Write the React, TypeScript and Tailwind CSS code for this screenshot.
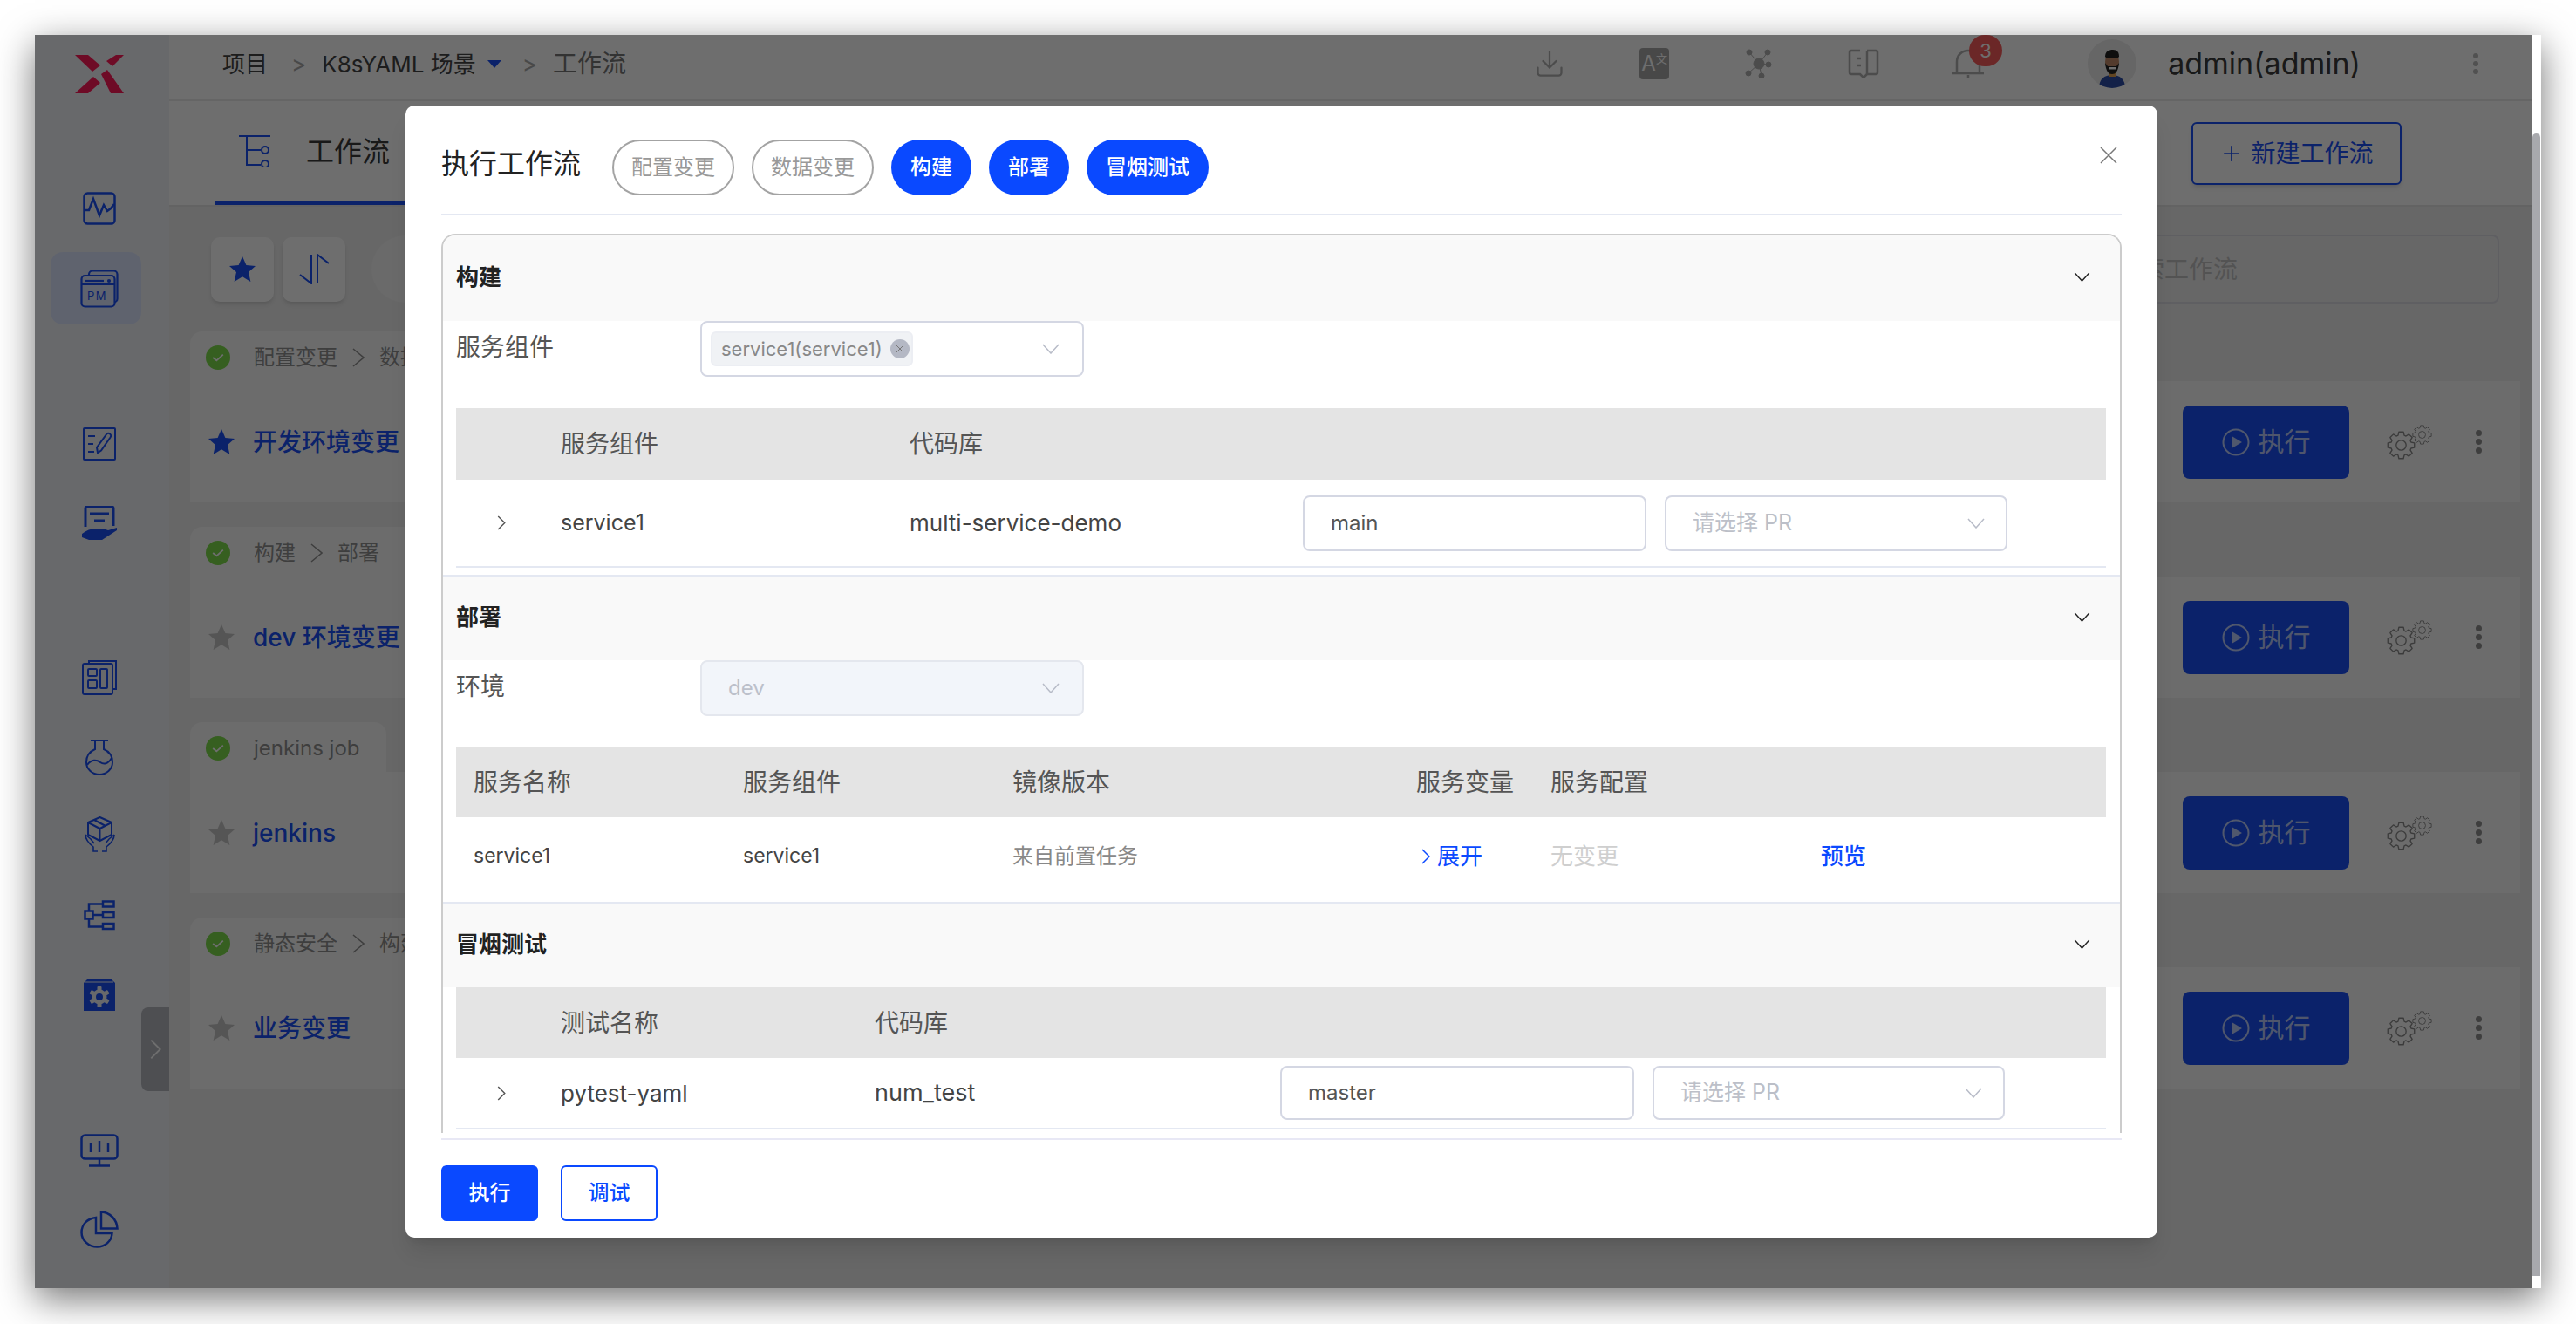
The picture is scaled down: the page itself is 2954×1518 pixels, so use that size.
import React from "react";
import { Plus, Download } from "lucide-react";

const StarIcon = ({ className }: { className: string }) => (
  <svg viewBox="0 0 30 29" className={className} fill="currentColor">
    <path d="M15 0l4.400 10 10.600 1-8 7.100 2.400 10.900-9.400-5.700-9.400 5.700 2.400-10.900-8-7.100 10.600-1z" />
  </svg>
);

const Sep = ({ className }: { className: string }) => (
  <svg viewBox="0 0 14 22" className={className} fill="none" stroke="#8f8f8f" strokeWidth="1.500">
    <polyline points="1,1 13,11 1,21" />
  </svg>
);

const DownChevron = ({ className, color }: { className: string; color: string }) => (
  <svg viewBox="0 0 20 12" className={className} fill="none" stroke={color} strokeWidth="1.500">
    <polyline points="1,1 10,11 19,1" />
  </svg>
);

const RightChevron = ({ className, color }: { className: string; color: string }) => (
  <svg viewBox="0 0 10 18" className={className} fill="none" stroke={color} strokeWidth="1.500">
    <polyline points="1,1 9,9 1,17" />
  </svg>
);

// outline gear with 8 teeth, drawn in a 32x32 box
const gearPath = () => {
  const pts: string[] = [];
  for (let i = 0; i < 8; i++) {
    const a = (i * Math.PI) / 4;
    [
      [-0.3, 11.5],
      [-0.17, 15],
      [0.17, 15],
      [0.3, 11.5],
    ].forEach(([da, r]) => {
      pts.push(`${(16 + r * Math.cos(a + da)).toFixed(2)} ${(16 + r * Math.sin(a + da)).toFixed(2)}`);
    });
  }
  return `M${pts.join("L")}Z`;
};

const Gear = ({ className }: { className: string }) => (
  <svg viewBox="0 0 32 32" className={className} fill="none" stroke="#8a8a8a" strokeWidth="1.300" strokeLinejoin="round">
    <path d={gearPath()} />
    <circle cx="16" cy="16" r="5.500" />
  </svg>
);

const GearPair = () => (
  <div className="relative h-[40px] w-[52px]">
    <Gear className="absolute bottom-0 left-0 h-[33px] w-[33px]" />
    <Gear className="absolute right-0 top-0 h-[23px] w-[23px]" />
  </div>
);

const Dots = ({ className }: { className: string }) => (
  <div className={`flex flex-col gap-[3px] ${className}`}>
    <span className="h-[7px] w-[7px] rounded-full bg-[#909090]" />
    <span className="h-[7px] w-[7px] rounded-full bg-[#909090]" />
    <span className="h-[7px] w-[7px] rounded-full bg-[#909090]" />
  </div>
);

const WorkflowCard = ({
  stages,
  title,
  starred,
  tabWidth,
}: {
  stages: string[];
  title: string;
  starred?: boolean;
  tabWidth: string;
}) => (
  <div className="mb-[28px] flex flex-col">
    <div className={`flex h-[57px] items-center gap-[27px] overflow-hidden rounded-t-[14px] bg-[#fafafa] pl-[18px] pt-[2px] ${tabWidth}`}>
      <span className="flex h-[28px] w-[28px] shrink-0 items-center justify-center rounded-full bg-[#7ddc4a]">
        <svg viewBox="0 0 16 12" className="h-[10px] w-[14px]" fill="none" stroke="#fff" strokeWidth="2.200">
          <polyline points="1,6 6,10 15,2" />
        </svg>
      </span>
      <div className="flex items-center gap-[17px] text-[24px] text-[#909090]">
        {stages.map((s, i) => (
          <React.Fragment key={s}>
            {i > 0 && <Sep className="h-[22px] w-[14px] shrink-0" />}
            <span className="whitespace-nowrap">{s}</span>
          </React.Fragment>
        ))}
      </div>
    </div>
    <div className="flex h-[139px] items-center bg-[#fafafa] pl-[21px] pr-[44px]">
      <StarIcon className={`h-[29px] w-[30px] ${starred ? "text-[#1a50f5]" : "text-[#c6c6c6]"}`} />
      <span className="ml-[21px] text-[28px] font-medium text-[#1a50f5]">{title}</span>
      <button className="ml-auto flex h-[84px] w-[191px] items-center justify-center gap-[10px] rounded-[8px] bg-[#1a50f5] text-[30px] text-white/70">
        <svg viewBox="0 0 32 32" className="h-[32px] w-[32px]" fill="none" stroke="currentColor" strokeWidth="2">
          <circle cx="16" cy="16" r="14.500" />
          <path d="M12 9.500l11 6.500-11 6.500z" fill="currentColor" stroke="none" />
        </svg>
        执行
      </button>
      <div className="ml-[43px]">
        <GearPair />
      </div>
      <Dots className="ml-[50px]" />
    </div>
  </div>
);

const Sidebar = () => (
  <aside className="relative flex h-full w-[154px] flex-col items-start bg-[#f2f4f9] text-[#1a50f5]">
    <svg viewBox="0 0 56 44" className="ml-[46px] mt-[23px] h-[44px] w-[56px]" fill="#ff1a58">
      <path d="M0 0H15L29 12 20 19Z" />
      <path d="M36 7L47 0H56L43 13Z" />
      <path d="M0 44L21 25 29 32 15 44Z" />
      <path d="M30 22L37 17 56 44H41Z" />
    </svg>
    <svg viewBox="0 0 38 38" className="ml-[55px] mt-[113px] h-[38px] w-[38px]" fill="none" stroke="currentColor" strokeWidth="2.500">
      <rect x="1.500" y="1.500" width="35" height="35" rx="4" />
      <polyline points="2,21 7,21 12,8 19,27 24,15 28,22 32,19 36,14" />
    </svg>
    <div className="ml-[18px] mt-[31px] flex h-[83px] w-[104px] items-center justify-center rounded-[14px] bg-[#dde6ff]">
      <svg viewBox="0 0 44 44" className="ml-[8px] h-[44px] w-[44px]" fill="none" stroke="currentColor" strokeWidth="2.200">
        <rect x="10" y="1.500" width="32.500" height="36" rx="4" />
        <rect x="1.500" y="7" width="38" height="35.500" rx="4" fill="#dde6ff" />
        <line x1="6" y1="13" x2="27" y2="13" />
        <circle cx="33" cy="13" r="1" />
        <line x1="1.500" y1="17" x2="39.500" y2="17" />
        <text x="8" y="35" fontSize="13" fill="currentColor" stroke="none" letterSpacing="1.500">PM</text>
      </svg>
    </div>
    <svg viewBox="0 0 38 38" className="ml-[55px] mt-[118px] h-[38px] w-[38px]" fill="none" stroke="currentColor" strokeWidth="2">
      <rect x="1" y="1" width="36" height="36" rx="1" />
      <line x1="6" y1="10" x2="14" y2="10" />
      <line x1="6" y1="19" x2="12" y2="19" />
      <line x1="6" y1="28" x2="13" y2="28" />
      <path d="M17 29l-1-6 11-15c1-1.500 3-1.500 4-.500 1.500 1 1.500 2.500.500 4l-10.500 15z" />
    </svg>
    <svg viewBox="0 0 40 39" className="ml-[54px] mt-[52px] h-[39px] w-[40px]" fill="none" stroke="currentColor" strokeWidth="3">
      <path d="M4 24V3a2 2 0 0 1 2-2h28a2 2 0 0 1 2 2v20" />
      <line x1="9" y1="9" x2="31" y2="9" />
      <line x1="14" y1="17" x2="26" y2="17" />
      <path d="M0 32c5-4 10-6 16-6h8l6 2 10-3v3L23 39H8l-8-3z" fill="currentColor" stroke="none" />
    </svg>
    <svg viewBox="0 0 40 40" className="ml-[54px] mt-[138px] h-[40px] w-[40px]" fill="none" stroke="currentColor" strokeWidth="2">
      <path d="M8 4V1h31v32h-4" />
      <rect x="1" y="4" width="34" height="35" rx="2" />
      <rect x="7" y="10" width="10" height="8" rx="1" />
      <rect x="7" y="23" width="10" height="9" rx="1" />
      <rect x="21" y="10" width="8" height="22" rx="1" />
    </svg>
    <svg viewBox="0 0 32 41" className="ml-[58px] mt-[51px] h-[41px] w-[32px]" fill="none" stroke="currentColor" strokeWidth="2">
      <line x1="6" y1="1" x2="26" y2="1" />
      <path d="M11 1v10C4 14 1 20 1 26c0 8 7 14 15 14s15-6 15-14c0-6-3-12-10-15V1" />
      <path d="M2 29c5-7 11-6 15-3s9 2 13-5" />
    </svg>
    <svg viewBox="0 0 35 45" className="ml-[57px] mt-[47px] h-[45px] w-[35px]" fill="none" stroke="currentColor" strokeWidth="2">
      <path d="M17.500 1L31 7v14l-13.500 7L4 21V7z" />
      <path d="M4 7l13.500 7L31 7M17.500 14v14M11 4l13 7" />
      <path d="M1 21c0 6 4 10 9 14v5h5M34 21c0 6-4 10-9 14v5h-5" strokeWidth="1.600" />
      <path d="M1 21l6 5 4 5M34 21l-6 5-4 5" strokeWidth="1.600" />
    </svg>
    <svg viewBox="0 0 36 35" className="ml-[56px] mt-[51px] h-[35px] w-[36px]" fill="none" stroke="currentColor" strokeWidth="2.500">
      <rect x="1.500" y="12.500" width="9" height="9" />
      <rect x="22" y="1.500" width="12.500" height="6" />
      <rect x="22" y="14" width="12.500" height="6" />
      <rect x="22" y="27" width="12.500" height="6" />
      <path d="M6 12V4.500h16M6 22v8.500h16M10.500 17H22" />
    </svg>
    <svg viewBox="0 0 36 36" className="ml-[56px] mt-[56px] h-[36px] w-[36px]">
      <path d="M4 0h28l4 4v32H0V4z" fill="currentColor" />
      <line x1="2" y1="3" x2="34" y2="3" stroke="#f2f4f9" strokeWidth="1" />
      <g fill="#f2f4f9">
        <circle cx="18" cy="20" r="8.500" />
        <rect x="15.500" y="8" width="5" height="24" rx="1" />
        <rect x="15.500" y="8" width="5" height="24" rx="1" transform="rotate(60 18 20)" />
        <rect x="15.500" y="8" width="5" height="24" rx="1" transform="rotate(120 18 20)" />
      </g>
      <circle cx="18" cy="20" r="4" fill="currentColor" />
    </svg>
    <svg viewBox="0 0 44 38" className="ml-[52px] mt-[141px] h-[38px] w-[44px]" fill="none" stroke="currentColor" strokeWidth="2.500">
      <rect x="1.500" y="1.500" width="41" height="27" rx="4" />
      <path d="M12 10v11M22 8v13M32 10v11M22 29v7M10 36.500h24" />
    </svg>
    <svg viewBox="0 0 44 43" className="ml-[52px] mt-[50px] h-[43px] w-[44px]" fill="none" stroke="currentColor" strokeWidth="2.500">
      <path d="M18 8C8 9 1.500 16 1.500 25c0 9 8 16.500 18 16.500 9 0 16.500-6.500 17-15.500H18z" />
      <path d="M24 1.500v19h18.500C42 10 34 2 24 1.500z" />
    </svg>
    <div className="absolute right-0 top-[1115px] flex h-[96px] w-[32px] items-center justify-center rounded-l-[8px] bg-[#b5b8bf]">
      <RightChevron className="h-[24px] w-[13px]" color="#fff" />
    </div>
  </aside>
);

const TopBar = () => (
  <header className="flex h-[76px] shrink-0 items-center border-b-2 border-[#e9e9e9] bg-white pb-[8px] pl-[61px] pr-[62px] text-[26px] text-[#454545]">
    <span>项目</span>
    <span className="ml-[27px] mr-[18px] text-[#aaa]">&gt;</span>
    <span>K8sYAML 场景</span>
    <span className="ml-[13px] h-0 w-0 border-x-[8px] border-t-[9px] border-x-transparent border-t-[#1a50f5]" />
    <span className="ml-[24px] text-[#aaa]">&gt;</span>
    <span className="ml-[18px] text-[28px] text-[#777]">工作流</span>
    <Download className="ml-auto h-[36px] w-[36px] text-[#b0b0b0]" strokeWidth={1.500} />
    <div className="ml-[85px] flex h-[36px] w-[34px] items-center justify-center rounded-[4px] bg-[#a8a8a8] text-[24px] leading-none text-white">
      A<span className="-mt-[12px] text-[13px]">文</span>
    </div>
    <svg viewBox="0 0 34 34" className="ml-[86px] h-[34px] w-[34px]" fill="#b0b0b0" stroke="#b0b0b0">
      <circle cx="17" cy="17" r="6" />
      <circle cx="6" cy="4" r="3" />
      <circle cx="27" cy="4" r="3" />
      <circle cx="5" cy="28" r="3" />
      <circle cx="28" cy="18" r="3" />
      <circle cx="20" cy="31" r="3" />
      <path d="M6 4l11 13 10-13M5 28l12-11 11 1M17 17l3 14" fill="none" />
    </svg>
    <svg viewBox="0 0 36 34" className="ml-[85px] h-[34px] w-[36px]" fill="none" stroke="#b0b0b0" strokeWidth="2.500">
      <path d="M14 2H4a2 2 0 0 0-2 2v23a2 2 0 0 0 2 2h10l4 4 4-4h10a2 2 0 0 0 2-2V4a2 2 0 0 0-2-2H22" />
      <line x1="22" y1="2" x2="22" y2="29" />
      <line x1="10" y1="11" x2="15" y2="11" />
      <line x1="10" y1="19" x2="15" y2="19" />
    </svg>
    <div className="relative ml-[84px] h-[34px] w-[36px]">
      <svg viewBox="0 0 36 34" className="h-[34px] w-[36px]" fill="none" stroke="#b0b0b0" strokeWidth="2.500">
        <path d="M5 28V15C5 7 11 2 18 2s13 5 13 13v13M0 28h36M18 30v3" />
      </svg>
      <span className="absolute -right-[21px] -top-[16px] flex h-[36px] w-[38px] items-center justify-center rounded-full bg-[#f85a5a] text-[22px] text-white">
        3
      </span>
    </div>
    <div className="ml-[119px] flex h-[56px] w-[56px] items-end justify-center overflow-hidden rounded-full bg-[#ececec]">
      <svg viewBox="0 0 34 44" className="h-[44px] w-[34px]">
        <path d="M2 44c0-10 6-15 15-15s15 5 15 15z" fill="#2c4ea8" />
        <rect x="13" y="22" width="8" height="9" fill="#e0a050" />
        <ellipse cx="17" cy="14" rx="8" ry="11" fill="#c08a68" />
        <path d="M9 8c0-6 4-8 9-8s7 3 7 8l-2 2-12 0z" fill="#222" />
        <path d="M9 15c1 10 4 13 8 13s7-3 8-13l-3 4h-10z" fill="#222" />
        <rect x="13" y="20" width="8" height="2.500" fill="#fff" />
      </svg>
    </div>
    <span className="ml-[36px] text-[34px] leading-none text-[#3a3a3a]">admin(admin)</span>
    <Dots className="ml-[129px] [&>span]:h-[6px] [&>span]:w-[6px] [&>span]:bg-[#bbb]" />
  </header>
);

const TabBar = () => (
  <div className="flex h-[121px] shrink-0 items-stretch border-b-2 border-[#e6e6e6] bg-white pl-[52px] pr-[150px]">
    <div className="flex w-[300px] items-center border-b-4 border-[#1a50f5] pl-[28px]">
      <svg viewBox="0 0 36 37" className="h-[37px] w-[36px] text-[#1a50f5]" fill="none" stroke="currentColor" strokeWidth="2">
        <path d="M0 1h36M9 1v33h16M9 17h16" />
        <circle cx="30" cy="17" r="4" />
        <circle cx="30" cy="33" r="4" />
      </svg>
      <span className="ml-[41px] text-[32px] text-[#3a3a3a]">工作流</span>
    </div>
    <button className="my-auto ml-auto flex h-[72px] w-[241px] items-center justify-center gap-[8px] rounded-[6px] border-2 border-[#1a50f5] text-[28px] text-[#1a50f5] shadow-md">
      <Plus className="h-[28px] w-[28px]" strokeWidth={1.500} />
      新建工作流
    </button>
  </div>
);

const Toolbar = () => (
  <div className="ml-[48px] mr-[38px] mt-[32px] flex h-[79px] shrink-0 items-center">
    <div className="flex h-[74px] w-[72px] items-center justify-center rounded-[10px] bg-white text-[#1a50f5] shadow-md">
      <StarIcon className="h-[29px] w-[30px]" />
    </div>
    <div className="ml-[10px] flex h-[74px] w-[72px] items-center justify-center rounded-[10px] bg-white text-[#1a50f5] shadow-md">
      <svg viewBox="0 0 34 35" className="h-[35px] w-[34px]" fill="none" stroke="currentColor" strokeWidth="2">
        <path d="M14 1v33L1 24M21 34V1l13 10" />
      </svg>
    </div>
    <div className="ml-[30px] h-[77px] w-[300px] rounded-full bg-[#f5f5f5]" />
    <div className="ml-auto flex h-[79px] w-[700px] items-center justify-end rounded-[8px] border-2 border-[#dcdce4] pr-[298px] text-[28px] text-[#c0c0c0]">
      搜索工作流
    </div>
  </div>
);

const SelectBox = ({ text, className }: { text: string; className: string }) => (
  <div className={`flex items-center justify-between rounded-[8px] border-2 border-[#d4d7e3] ${className}`}>
    <span className="text-[25px] text-[#bcbfc8]">{text}</span>
    <DownChevron className="h-[12px] w-[20px]" color="#b8bcc8" />
  </div>
);

const SectionHead = ({ title, first }: { title: string; first?: boolean }) => (
  <div
    className={`flex items-center justify-between bg-[#f9f9f9] pb-[3px] pl-[15px] pr-[34px] ${
      first ? "h-[98px]" : "h-[98px] border-t-2 border-[#e4e8f2]"
    }`}
  >
    <span className="text-[26px] font-bold text-[#222]">{title}</span>
    <DownChevron className="h-[11px] w-[19px]" color="#222" />
  </div>
);

const ExecuteModal = () => (
  <div className="absolute left-[425px] top-[81px] flex h-[1298px] w-[2009px] flex-col rounded-[10px] bg-white px-[41px] shadow-xl">
    <div className="flex h-[126px] shrink-0 items-center border-b-2 border-[#e4e8f2] pt-[18px]">
      <span className="-mt-[8px] text-[32px] text-[#222]">执行工作流</span>
      <div className="ml-[36px] flex items-center gap-[20px] text-[24px]">
        <span className="flex h-[64px] w-[140px] items-center justify-center rounded-full border-2 border-[#a3a3a3] text-[#999]">配置变更</span>
        <span className="flex h-[64px] w-[140px] items-center justify-center rounded-full border-2 border-[#a3a3a3] text-[#999]">数据变更</span>
        <span className="flex h-[64px] w-[92px] items-center justify-center rounded-full bg-[#0a49ff] font-medium text-white">构建</span>
        <span className="flex h-[64px] w-[92px] items-center justify-center rounded-full bg-[#0a49ff] font-medium text-white">部署</span>
        <span className="flex h-[64px] w-[140px] items-center justify-center rounded-full bg-[#0a49ff] font-medium text-white">冒烟测试</span>
      </div>
    </div>
    <svg viewBox="0 0 20 20" className="absolute right-[46px] top-[47px] h-[20px] w-[20px]" fill="none" stroke="#777" strokeWidth="1.500">
      <path d="M1 1l18 18M19 1L1 19" />
    </svg>

    <div className="mt-[21px] h-[1031px] shrink-0 overflow-hidden rounded-t-[16px] border-x-2 border-t-2 border-[#cccccc] text-[#444]">
      <SectionHead title="构建" first />
      <div className="flex items-center pl-[15px]">
        <span className="-mt-[4px] w-[280px] text-[28px] text-[#555]">服务组件</span>
        <div className="flex h-[64px] w-[440px] items-center justify-between rounded-[8px] border-2 border-[#d4d7e3] pl-[10px] pr-[26px]">
          <span className="flex h-[40px] w-[232px] items-center rounded-[6px] border-2 border-[#eceef3] bg-[#f0f2f5] pl-[10px] text-[22px] text-[#888]">
            service1(service1)
            <span className="ml-[9px] flex h-[22px] w-[22px] items-center justify-center rounded-full bg-[#b4b8c4]">
              <svg viewBox="0 0 10 10" className="h-[10px] w-[10px]" fill="none" stroke="#777" strokeWidth="1">
                <path d="M1 1l8 8M9 1L1 9" />
              </svg>
            </span>
          </span>
          <DownChevron className="h-[12px] w-[20px]" color="#b8bcc8" />
        </div>
      </div>
      <div className="ml-[15px] mr-[16px] mt-[36px] grid h-[82px] grid-cols-[120px_400px_1fr] items-center bg-[#e4e4e4] text-[28px] text-[#555]">
        <span />
        <span>服务组件</span>
        <span>代码库</span>
      </div>
      <div className="ml-[15px] mr-[16px] grid h-[101px] grid-cols-[120px_400px_451px_394px_393px] items-center border-b-2 border-[#e4e8f2] text-[26px]">
        <RightChevron className="ml-[47px] h-[17px] w-[10px]" color="#555" />
        <span className="text-[25px]">service1</span>
        <span>multi-service-demo</span>
        <div className="flex h-[64px] w-[394px] items-center rounded-[8px] border-2 border-[#d4d7e3] pl-[30px] text-[24px] text-[#555]">main</div>
        <SelectBox text="请选择 PR" className="ml-[21px] h-[64px] w-[393px] pl-[30px] pr-[24px]" />
      </div>
      <div className="h-[8px]" />

      <SectionHead title="部署" />
      <div className="flex items-center pl-[15px]">
        <span className="-mt-[4px] w-[280px] text-[28px] text-[#555]">环境</span>
        <div className="flex h-[64px] w-[440px] items-center justify-between rounded-[8px] border-2 border-[#e4e7ee] bg-[#f2f5fa] pl-[30px] pr-[26px]">
          <span className="text-[24px] text-[#bcc0ca]">dev</span>
          <DownChevron className="h-[12px] w-[20px]" color="#b8bcc8" />
        </div>
      </div>
      <div className="ml-[15px] mr-[16px] mt-[36px] grid h-[80px] grid-cols-[20px_309px_309px_463px_154px_310px_1fr] items-center bg-[#e4e4e4] text-[28px] text-[#555]">
        <span />
        <span>服务名称</span>
        <span>服务组件</span>
        <span>镜像版本</span>
        <span>服务变量</span>
        <span>服务配置</span>
      </div>
      <div className="ml-[15px] mr-[16px] grid h-[97px] grid-cols-[20px_309px_309px_463px_154px_310px_1fr] items-center pb-[8px] text-[23px]">
        <span />
        <span>service1</span>
        <span>service1</span>
        <span className="text-[24px] text-[#888]">来自前置任务</span>
        <span className="flex items-center gap-[8px] text-[26px] text-[#0a49ff]">
          <RightChevron className="ml-[6px] h-[20px] w-[10px]" color="#0a49ff" />
          展开
        </span>
        <span className="text-[26px] text-[#cfcfcf]">无变更</span>
        <span className="text-[26px] font-medium text-[#0a49ff]">预览</span>
      </div>

      <SectionHead title="冒烟测试" />
      <div className="ml-[15px] mr-[16px] grid h-[81px] grid-cols-[120px_360px_1fr] items-center bg-[#e4e4e4] text-[28px] text-[#555]">
        <span />
        <span>测试名称</span>
        <span>代码库</span>
      </div>
      <div className="ml-[15px] mr-[16px] grid h-[82px] grid-cols-[120px_360px_465px_406px_404px] items-center border-b-2 border-[#e4e8f2] text-[26px]">
        <RightChevron className="ml-[47px] h-[17px] w-[10px]" color="#555" />
        <span>pytest-yaml</span>
        <span className="text-[27px]">num_test</span>
        <div className="flex h-[62px] w-[406px] items-center rounded-[8px] border-2 border-[#d4d7e3] pl-[30px] text-[24px] text-[#555]">master</div>
        <SelectBox text="请选择 PR" className="ml-[21px] h-[62px] w-[404px] pl-[30px] pr-[24px]" />
      </div>
    </div>

    <div className="mt-[6px] border-t-2 border-[#e8e8f5] pt-[29px]">
      <div className="flex gap-[26px] text-[24px] font-medium">
        <button className="h-[64px] w-[111px] rounded-[6px] bg-[#0a49ff] text-white">执行</button>
        <button className="h-[64px] w-[111px] rounded-[6px] border-2 border-[#0a49ff] text-[#0a49ff]">调试</button>
      </div>
    </div>
  </div>
);

const App = () => (
  <div
    className="h-[1518px] w-[2954px] overflow-hidden bg-white pl-[40px] pt-[40px]"
    style={{ fontFamily: 'Inter, "Noto Sans CJK SC", sans-serif' }}
  >
    <div className="flex h-[1437px] w-[2874px] shadow-[0_12px_40px_rgba(0,0,0,0.55)]">
      <div className="relative flex h-full w-[2864px] overflow-hidden bg-[#efefef]">
        <Sidebar />
        <main className="flex min-w-0 flex-1 flex-col">
          <TopBar />
          <TabBar />
          <Toolbar />
          <div className="ml-[24px] mr-[14px] mt-[32px]">
            <WorkflowCard stages={["配置变更", "数据"]} title="开发环境变更" starred tabWidth="w-[300px]" />
            <WorkflowCard stages={["构建", "部署"]} title="dev 环境变更" tabWidth="w-[300px]" />
            <WorkflowCard stages={["jenkins job"]} title="jenkins" tabWidth="w-[225px]" />
            <WorkflowCard stages={["静态安全", "构建"]} title="业务变更" tabWidth="w-[300px]" />
          </div>
        </main>
        <div className="absolute inset-0 bg-black/[0.57]" />
        <ExecuteModal />
      </div>
      <div className="flex h-full w-[10px] flex-col bg-white pb-[14px] pt-[113px]">
        <div className="h-full w-[9px] rounded-t-full bg-[#a8a9ad]" />
      </div>
    </div>
  </div>
);

export default App;
